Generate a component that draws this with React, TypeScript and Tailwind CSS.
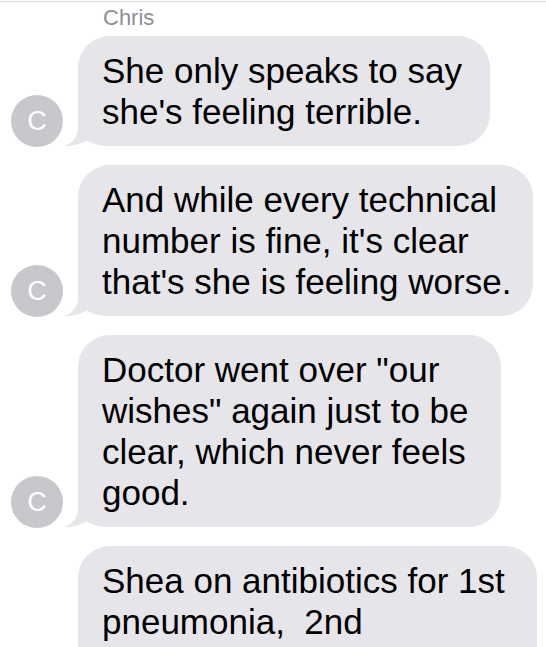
import React from "react";

type Msg = {
  lines: string[];
  width: string;
  tail: boolean;
};

const messages: Msg[] = [
  {
    lines: ["She only speaks to say", "she's feeling terrible."],
    width: "w-[412px]",
    tail: true,
  },
  {
    lines: [
      "And while every technical",
      "number is fine, it's clear",
      "that's she is feeling worse.",
    ],
    width: "w-[455px]",
    tail: true,
  },
  {
    lines: [
      'Doctor went over "our',
      'wishes" again just to be',
      "clear, which never feels",
      "good.",
    ],
    width: "w-[423px]",
    tail: true,
  },
  {
    lines: ["Shea on antibiotics for 1st", "pneumonia,\u00a0 2nd"],
    width: "w-[459px]",
    tail: false,
  },
];

function Tail() {
  return (
    <svg
      className="absolute left-[-14px] bottom-0"
      width="46"
      height="34"
      viewBox="0 0 46 34"
    >
      <path
        d="M14 0 L14 16 C14 25 9 31 0 34 C9 34 17 32 23 28.5 C29 32 35 34 46 34 L46 0 Z"
        fill="#e5e5ea"
      />
    </svg>
  );
}

function Avatar({ show }: { show: boolean }) {
  if (!show) return <div className="w-[52px] shrink-0" />;
  return (
    <div className="w-[52px] h-[52px] shrink-0 rounded-full bg-[#c7c7cc] flex items-center justify-center text-white text-[27px] leading-none mb-[-1px]">
      C
    </div>
  );
}

export default function App() {
  return (
    <div className="min-h-screen bg-white font-['Liberation_Sans',Arial,sans-serif]">
      <div className="h-px mt-px bg-[#d6d6d6]" />
      <div className="pl-[103px] pt-[3px] text-[22px] leading-[26px] text-[#8e8e93]">
        Chris
      </div>

      {/* message group */}
      <div className="flex flex-col gap-[19px] mt-[5px]">
        {messages.map((m, i) => (
          <div key={i} className="flex items-end pl-[11px] gap-[15px]">
            <Avatar show={m.tail} />
            <div
              className={`relative ${m.width} bg-[#e5e5ea] rounded-[32px] pl-[24px] py-[14px] ${
                m.tail ? "" : "pb-[60px]"
              }`}
            >
              {m.tail && <Tail />}
              <div className="relative text-[35px] leading-[41px] text-black whitespace-nowrap">
                {m.lines.map((l, j) => (
                  <div key={j}>{l}</div>
                ))}
              </div>
            </div>
          </div>
        ))}
      </div>
    </div>
  );
}
